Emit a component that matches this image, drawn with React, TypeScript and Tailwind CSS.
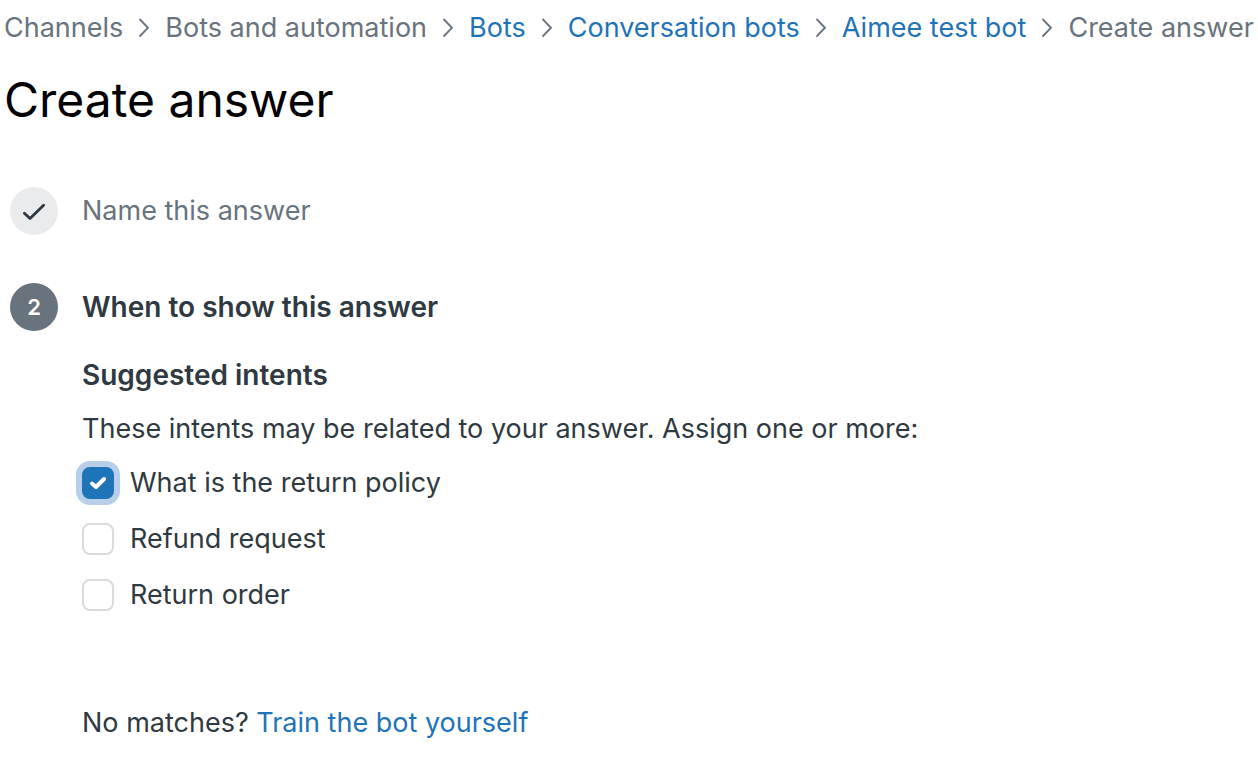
import { Fragment } from "react";

const crumbs = [
  { label: "Channels" },
  { label: "Bots and automation" },
  { label: "Bots", href: "#bots" },
  { label: "Conversation bots", href: "#conversation-bots" },
  { label: "Aimee test bot", href: "#aimee-test-bot" },
  { label: "Create answer" },
];

const intents = [
  { id: "return-policy", label: "What is the return policy", checked: true },
  { id: "refund-request", label: "Refund request", checked: false },
  { id: "return-order", label: "Return order", checked: false },
];

function Breadcrumbs() {
  return (
    <nav aria-label="Breadcrumb" className="flex items-center whitespace-nowrap text-[27px] leading-10 text-[#68737d]">
      {crumbs.map((crumb, i) => (
        <Fragment key={crumb.label}>
          {i > 0 && (
            <svg className="mx-[9px] h-6 w-6 shrink-0" viewBox="0 0 24 24" fill="none" stroke="currentColor" strokeWidth="1.8" strokeLinecap="round">
              <path d="M8 3.5l8 8.25L8 20" />
            </svg>
          )}
          {crumb.href ? (
            <a href={crumb.href} className="text-[#1f73b7]">{crumb.label}</a>
          ) : (
            <span>{crumb.label}</span>
          )}
        </Fragment>
      ))}
    </nav>
  );
}

function IntentOption({ id, label, checked }: { id: string; label: string; checked: boolean }) {
  return (
    <div className="flex h-10 items-center gap-4">
      <span className="relative flex h-8 w-8">
        <input
          id={id}
          type="checkbox"
          defaultChecked={checked}
          className="peer h-8 w-8 appearance-none rounded-[8px] border-2 border-[#d8dcde] bg-white checked:border-[#1f73b7] checked:bg-[#1f73b7] checked:ring-6 checked:ring-[#b7cfe8]"
        />
        <svg className="pointer-events-none absolute inset-0 hidden h-8 w-8 peer-checked:block" viewBox="0 0 32 32" fill="none" stroke="white" strokeWidth="4" strokeLinecap="round" strokeLinejoin="round">
          <path d="M10 16.5l4 3.5 8-8" />
        </svg>
      </span>
      <label htmlFor={id}>{label}</label>
    </div>
  );
}

export default function App() {
  return (
    <main className="min-h-screen overflow-x-hidden bg-white px-1 pt-2 font-['Inter',sans-serif] text-[27px] leading-10 text-[#2f3941]">
      <Breadcrumbs />
      <h1 className="mt-5 text-[48px] leading-16 text-black">Create answer</h1>

      <div className="mt-[47px] px-[6px]">
        <div className="flex h-16 items-center gap-6">
          <span className="flex h-12 w-12 items-center justify-center rounded-full bg-[#e9ebed]">
            <svg className="h-6 w-6" viewBox="0 0 24 24" fill="none" stroke="currentColor" strokeWidth="2.8" strokeLinecap="round" strokeLinejoin="round">
              <path d="M2.4 14.2l5.6 5.4L21.6 6.2" />
            </svg>
          </span>
          <span className="text-[#68737d]">Name this answer</span>
        </div>
        <div className="mt-8 flex h-16 items-center gap-6">
          <span className="flex h-12 w-12 items-center justify-center rounded-full bg-[#68737d] text-[22px] font-semibold text-white">2</span>
          <h2 className="text-[28px] font-semibold">When to show this answer</h2>
        </div>

        <section className="ml-18 mt-4">
          <h3 className="text-[28px] font-semibold">Suggested intents</h3>
          <p className="mt-[14px]">These intents may be related to your answer. Assign one or more:</p>
          <div className="mt-[14px] flex flex-col gap-4">
            {intents.map((intent) => (
              <IntentOption key={intent.id} {...intent} />
            ))}
          </div>
          <p className="mt-22">
            No matches?{" "}
            <a href="#train" className="text-[#1f73b7]">Train the bot yourself</a>
          </p>
        </section>
      </div>
    </main>
  );
}
